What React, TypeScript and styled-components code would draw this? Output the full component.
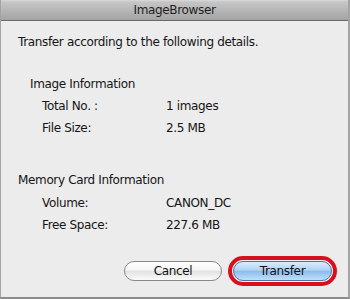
import * as React from "react";
import styled, { createGlobalStyle } from "styled-components";

const GlobalStyle = createGlobalStyle`
  html, body {
    margin: 0;
    padding: 0;
    background: #ececec;
  }
  body {
    font-family: "DejaVu Sans", "Liberation Sans", sans-serif;
    letter-spacing: -0.35px;
  }
`;

const Window = styled.div`
  width: 350px;
  height: 299px;
  box-sizing: border-box;
  display: flex;
  flex-direction: column;
  background: #ececec;
  border-left: 1px solid #a3a3a3;
  border-right: 2px solid #a3a3a3;
  border-bottom: 2px solid #8c8c8c;
`;

const TitleBar = styled.div`
  height: 21px;
  box-sizing: border-box;
  display: flex;
  align-items: center;
  justify-content: center;
  background: linear-gradient(#dadada, #c6c6c6 10%, #a4a4a4);
  border-bottom: 1px solid #6a6a6a;
  font-size: 12px;
  color: #1e1e1e;
`;

const Body = styled.div`
  flex: 1;
  display: flex;
  flex-direction: column;
  padding: 10px 0 0 17px;
  font-size: 12px;
  line-height: 22px;
  color: #151515;
`;

const Intro = styled.div`
  margin-bottom: 20px;
`;

const Section = styled.div<{ $gap: number }>`
  margin-bottom: ${(p) => p.$gap}px;
  display: flex;
  flex-direction: column;
`;

const SectionTitle = styled.div<{ $indent: number; $after: number }>`
  padding-left: ${(p) => p.$indent}px;
  margin-bottom: ${(p) => p.$after}px;
`;

const Row = styled.div`
  display: grid;
  grid-template-columns: 124px 1fr;
  padding-left: 24px;
`;

const Footer = styled.div`
  margin-top: auto;
  display: flex;
  justify-content: flex-end;
  align-items: center;
  gap: 6px;
  padding: 0 11px 11px 0;
`;

const Button = styled.button<{ $primary?: boolean }>`
  width: ${(p) => (p.$primary ? 99 : 98)}px;
  height: 20px;
  border-radius: 10px;
  font-family: inherit;
  letter-spacing: -0.35px;
  font-size: 12px;
  color: #111;
  border: 1px solid ${(p) => (p.$primary ? "#50739c" : "#888")};
  background: ${(p) =>
    p.$primary
      ? "linear-gradient(#dcecfb 0%, #b0d3f4 45%, #8cbdee 52%, #bfe0fb 100%)"
      : "linear-gradient(#ffffff 0%, #f4f4f4 45%, #e2e2e2 52%, #fbfbfb 100%)"};
  padding: 0;
`;

const Highlight = styled.div`
  padding: 1px;
  border: 4px solid #d6101e;
  border-radius: 16px;
  display: flex;
  background: #f2f2f2;
`;

const sections = [
  {
    title: "Image Information",
    indent: 12,
    gap: 30,
    after: 0,
    rows: [
      ["Total No. :", "1 images"],
      ["File Size:", "2.5 MB"],
    ],
  },
  {
    title: "Memory Card Information",
    indent: 0,
    gap: 0,
    after: 1,
    rows: [
      ["Volume:", "CANON_DC"],
      ["Free Space:", "227.6 MB"],
    ],
  },
];

export default function App() {
  return (
    <>
      <GlobalStyle />
      <Window>
        <TitleBar>ImageBrowser</TitleBar>
        <Body>
          <Intro>Transfer according to the following details.</Intro>
          {sections.map((s) => (
            <Section key={s.title} $gap={s.gap}>
              <SectionTitle $indent={s.indent} $after={s.after}>
                {s.title}
              </SectionTitle>
              {s.rows.map(([k, v]) => (
                <Row key={k}>
                  <span>{k}</span>
                  <span>{v}</span>
                </Row>
              ))}
            </Section>
          ))}
        </Body>
        <Footer>
          <Button>Cancel</Button>
          <Highlight>
            <Button $primary>Transfer</Button>
          </Highlight>
        </Footer>
      </Window>
    </>
  );
}
